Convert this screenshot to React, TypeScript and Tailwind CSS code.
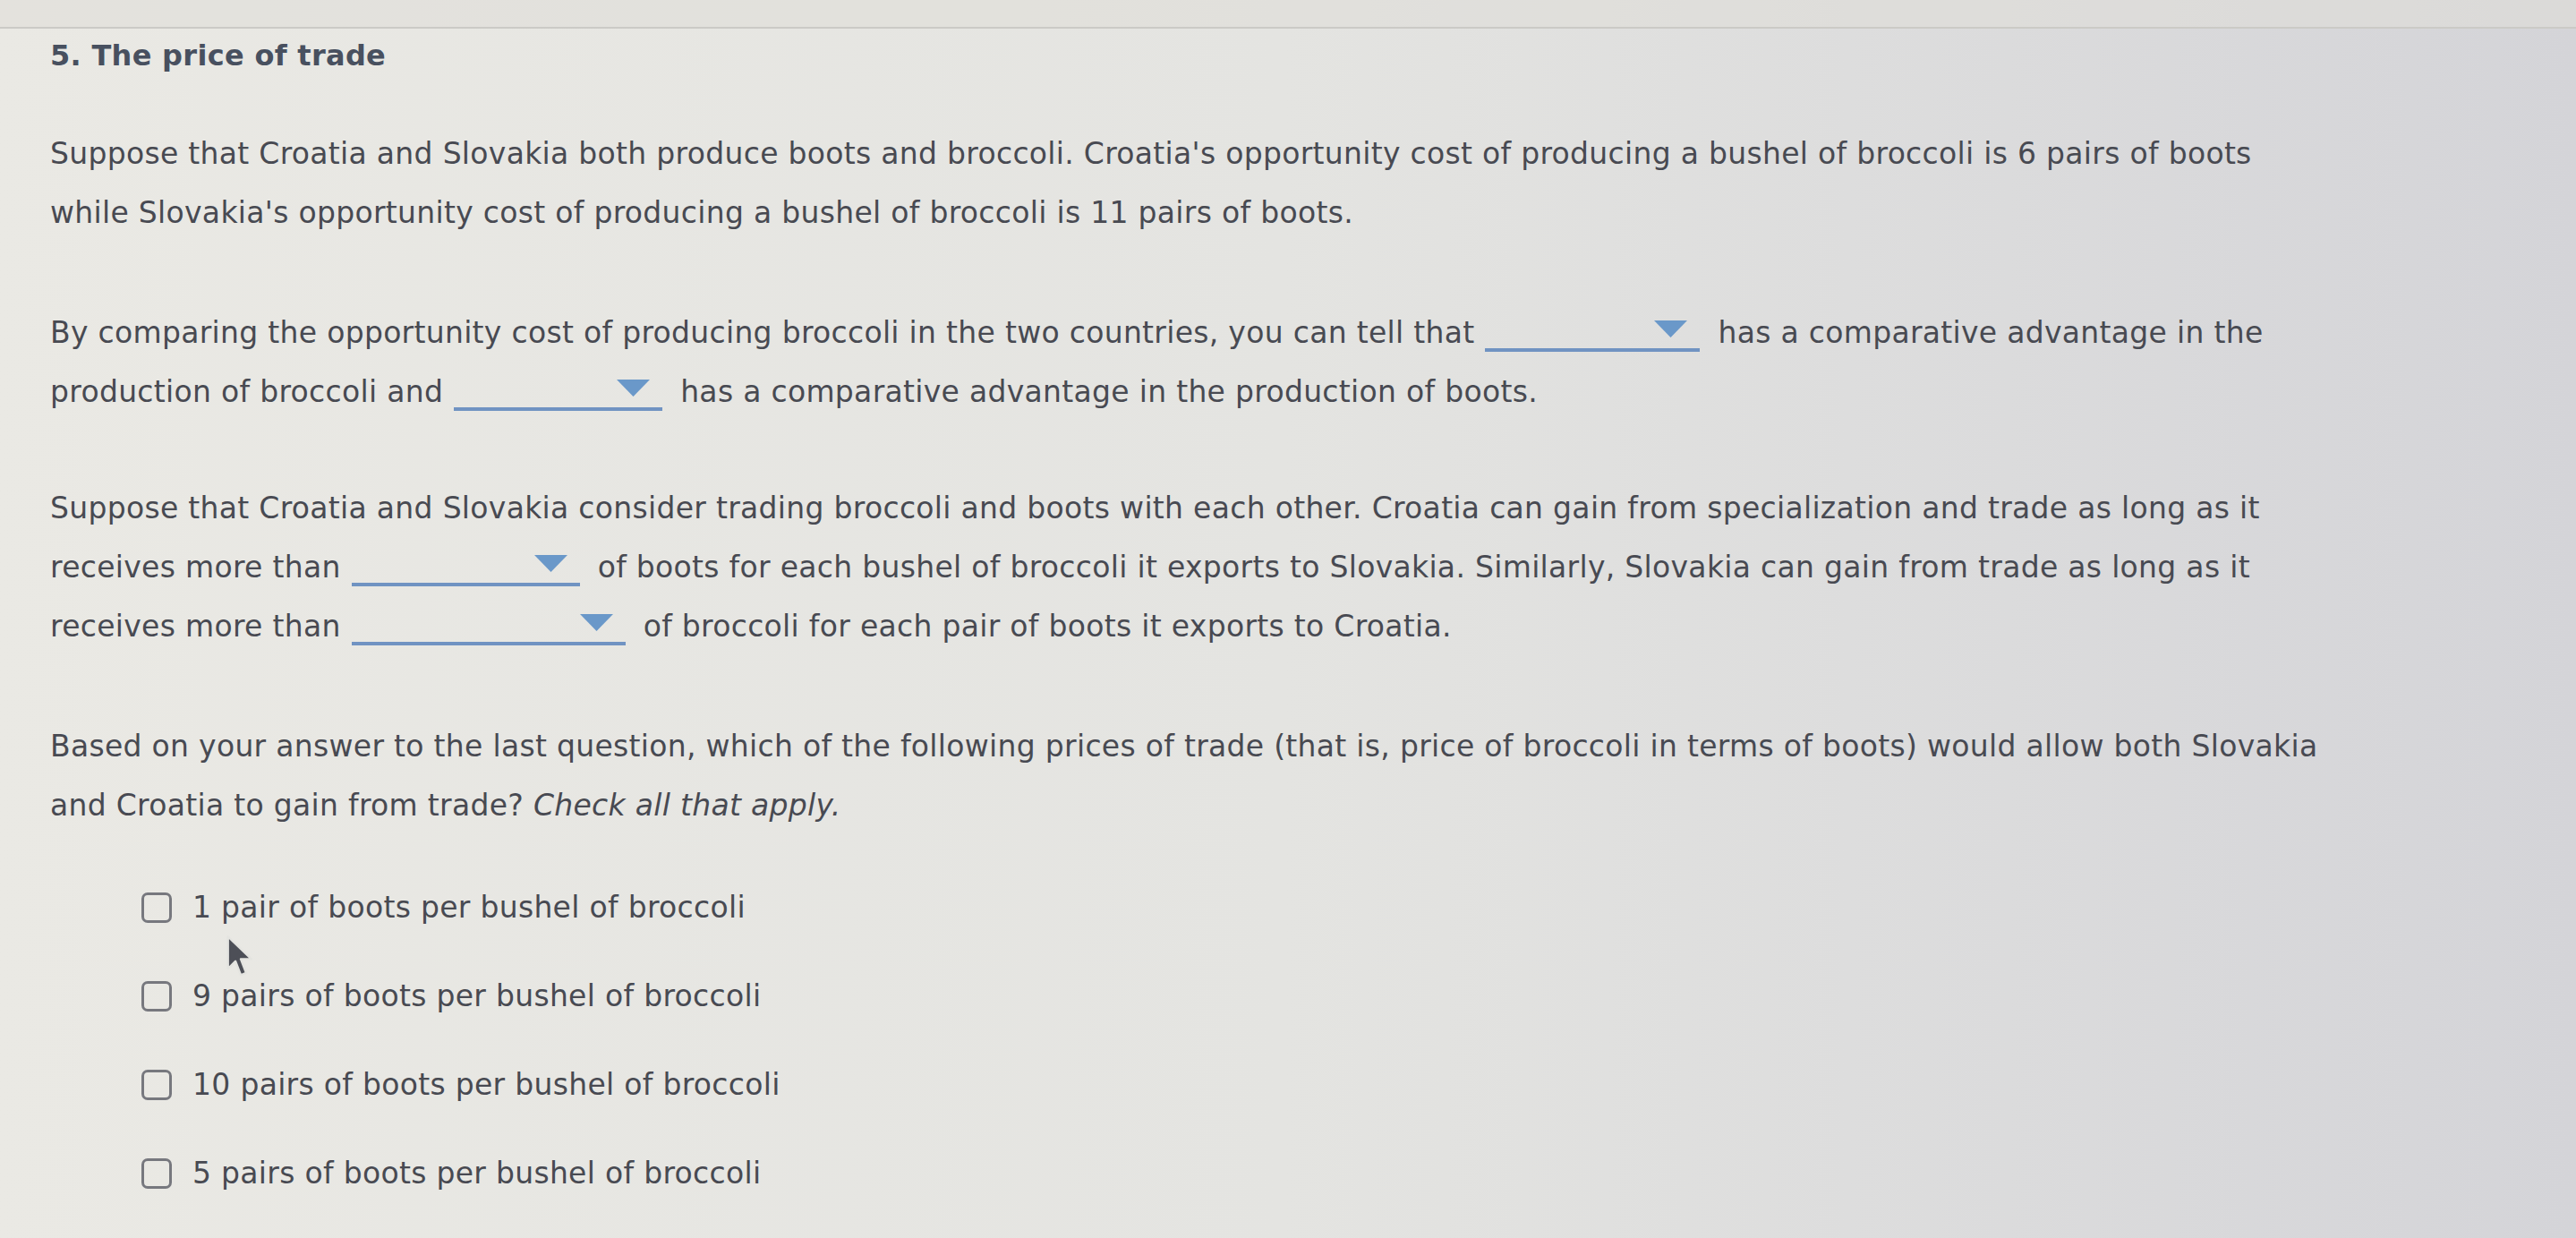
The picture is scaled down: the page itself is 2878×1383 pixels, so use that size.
import React from 'react';

const Dropdown: React.FC<{ width: string }> = ({ width }) => {
  return (
    <span className={`inline-block overflow-hidden ${width} h-[40px] align-[-10px] ml-[12px] mr-[20px]`}>
      <span className="flex h-full items-end justify-end pr-[14px] pb-[12px] border-b-4 border-[#7093c2]">
        <svg width="37" height="19" viewBox="0 0 37 19">
          <polygon points="0,0 37,0 18.5,19" fill="#6a98c9" />
        </svg>
      </span>
    </span>
  );
};

const Option: React.FC<{ label: string }> = ({ label }) => {
  return (
    <div className="flex items-center gap-[23px] h-[50px]">
      <span className="w-[34px] h-[34px] rounded-[7px] border-[3px] border-[#77787e] shrink-0" />
      <span>{label}</span>
    </div>
  );
};

export default function App() {
  return (
    <div className="relative w-full h-[1383px] overflow-hidden bg-linear-to-r from-[#eae9e4] via-[#e4e4e1] to-[#d4d4d8] text-[#484a52] font-['DejaVu_Sans',Verdana,sans-serif] text-[33px] tracking-[0.3px] leading-[66px]">
      <div className="h-[32px] border-b-2 border-[#cbcac6] bg-[#dfded9]/60" />

      <div className="pl-[56px] whitespace-nowrap">
        <h1 className="mt-[10px] text-[32px] leading-[40px] font-bold text-[#48505f]">5. The price of trade</h1>

        <p className="mt-[57px]">
          Suppose that Croatia and Slovakia both produce boots and broccoli. Croatia's opportunity cost of producing a bushel of broccoli is 6 pairs of boots
          <br />
          while Slovakia's opportunity cost of producing a bushel of broccoli is 11 pairs of boots.
        </p>

        <p className="mt-[68px]">
          By comparing the opportunity cost of producing broccoli in the two countries, you can tell that
          <Dropdown width="w-[240px]" />
          has a comparative advantage in the
          <br />
          production of broccoli and
          <Dropdown width="w-[233px]" />
          has a comparative advantage in the production of boots.
        </p>

        <p className="mt-[64px]">
          Suppose that Croatia and Slovakia consider trading broccoli and boots with each other. Croatia can gain from specialization and trade as long as it
          <br />
          receives more than
          <Dropdown width="w-[255px]" />
          of boots for each bushel of broccoli it exports to Slovakia. Similarly, Slovakia can gain from trade as long as it
          <br />
          receives more than
          <Dropdown width="w-[306px]" />
          of broccoli for each pair of boots it exports to Croatia.
        </p>

        <p className="mt-[68px]">
          Based on your answer to the last question, which of the following prices of trade (that is, price of broccoli in terms of boots) would allow both Slovakia
          <br />
          and Croatia to gain from trade? <em>Check all that apply.</em>
        </p>

        <div className="mt-[56px] pl-[102px] flex flex-col gap-[49px]">
          <Option label="1 pair of boots per bushel of broccoli" />
          <Option label="9 pairs of boots per bushel of broccoli" />
          <Option label="10 pairs of boots per bushel of broccoli" />
          <Option label="5 pairs of boots per bushel of broccoli" />
        </div>
      </div>

      <svg className="absolute left-[252px] top-[1044px]" width="34" height="50" viewBox="0 0 28 42">
        <path d="M2 2 L2 32 L9 25 L14 38 L19 36 L14 23 L24 23 Z" fill="#4d4f57" stroke="#e4e4e0" strokeWidth="2" strokeLinejoin="round" />
      </svg>
    </div>
  );
}
